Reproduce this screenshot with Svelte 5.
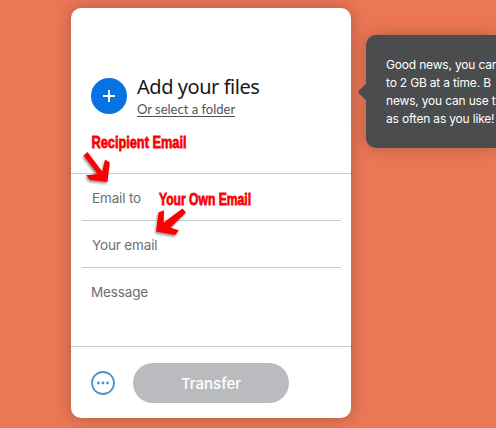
<script>
  const fields = ['Email to', 'Your email'];
  const tip = ['Good news, you can', 'to 2 GB at a time. B', 'news, you can use t', 'as often as you like!'];
</script>

<main>
  <section class="card">
    <header>
      <div class="plus">
        <svg width="36" height="36" viewBox="0 0 36 36"><path d="M18 12v12M12 18h12" stroke="#fff" stroke-width="2" /></svg>
      </div>
      <div class="titles">
        <h1>Add your files</h1>
        <a href="#folder">Or select a folder</a>
      </div>
    </header>
    <div class="fields">
      {#each fields as f}
        <div class="field"><span>{f}</span></div>
      {/each}
      <div class="message"><span>Message</span></div>
    </div>
    <footer>
      <svg width="24" height="24" viewBox="0 0 24 24">
        <circle cx="12" cy="12" r="11" fill="none" stroke="#4f94cf" stroke-width="1.8" />
        <g fill="#4f94cf"><circle cx="7.5" cy="12" r="1.4" /><circle cx="12" cy="12" r="1.4" /><circle cx="16.5" cy="12" r="1.4" /></g>
      </svg>
      <button>Transfer</button>
    </footer>
  </section>

  <aside>
    <svg class="tail" width="9" height="20" viewBox="0 0 9 20"><path d="M9 1 1 8.5Q-.3 10 1 11.5L9 19Z" fill="#4a4c4e" /></svg>
    {#each tip as line}<p>{line}</p>{/each}
  </aside>

  <svg class="notes" width="496" height="428" viewBox="0 0 496 428">
    <g class="note">
      <text x="91.5" y="148" textLength="95" lengthAdjust="spacingAndGlyphs">Recipient Email</text>
      <text x="159" y="205" textLength="92" lengthAdjust="spacingAndGlyphs">Your Own Email</text>
    </g>
    <g class="arrow">
      <path d="M87.5 152 83.5 155.5 97.5 174 86 175.3 90 180 107.5 182 109.8 162.5 105 159.5 102.3 171.5Z" />
      <path d="M182.5 208.5 186 212.5 170.5 227.5 179 230.5 175 235 156 231.5 158.5 212.5 164 210.3 163.7 222.5Z" />
    </g>
  </svg>
</main>

<style>
  :global(body) { background: #ec7755; }
  main {
    position: relative;
    width: 496px;
    height: 428px;
    box-sizing: border-box;
    padding: 8px 0 10px 71px;
    overflow: hidden;
    display: flex;
    align-items: flex-start;
    background: #ec7755;
    font-family: Inter, "Liberation Sans", sans-serif;
  }
  .card {
    flex: none;
    width: 280px;
    height: 410px;
    border-radius: 10px;
    background: #fff;
    display: flex;
    flex-direction: column;
    box-shadow: 0 0 16px rgba(70, 50, 40, 0.38);
  }
  header {
    box-sizing: border-box;
    height: 166px;
    padding: 66px 0 0 20px;
    display: flex;
    border-bottom: 1px solid #c9cacb;
  }
  .plus { margin-top: 4px; width: 36px; height: 36px; border-radius: 50%; background: #0773e3; }
  .plus svg, footer svg { display: block; flex: none; }
  .titles { margin-left: 10px; white-space: nowrap; }
  h1 { margin: 0; font: 400 20px/26px "Noto Sans", sans-serif; letter-spacing: -0.45px; color: #17181a; }
  a {
    display: inline-block;
    font: 13px/14px Lato, sans-serif;
    letter-spacing: 0;
    color: #505255;
    text-decoration: none;
    border-bottom: 1px solid #505255;
    margin-top: 2px;
    vertical-align: top;
  }
  .fields { height: 173px; font-size: 13.5px; letter-spacing: -0.15px; color: #6c6e71; box-sizing: border-box; border-bottom: 1px solid #c9cacb; }
  .field {
    height: 47px;
    box-sizing: border-box;
    margin: 0 10px 0 11px;
    padding: 1px 0 0 10px;
    border-bottom: 1px solid #c9cacb;
    display: flex;
    align-items: center;
  }
  .message { padding: 16px 0 0 20px; line-height: 17px; }
  footer { flex: 1; display: flex; align-items: center; padding: 1px 0 0 20px; }
  button {
    margin-left: 18px;
    width: 156px;
    height: 40px;
    border: 0;
    border-radius: 20px;
    background: #b9bbbe;
    color: #fff;
    font: 500 15px/20px Inter, sans-serif;
    padding: 2px 0 0;
  }
  aside {
    position: relative;
    flex: none;
    box-sizing: border-box;
    width: 130px;
    height: 113px;
    margin: 27px 0 0 15px;
    padding: 21px 0 0 20px;
    border-radius: 10px 0 0 10px;
    background: #4a4c4e;
    color: #fff;
    box-shadow: 0 0 16px rgba(70, 50, 40, 0.35);
  }
  aside p { margin: 0; font-size: 12px; letter-spacing: -0.18px; line-height: 18px; white-space: nowrap; }
  .tail { position: absolute; left: -8px; top: 47px; }
  .notes { position: absolute; left: 0; top: 0; pointer-events: none; }
  .note text { font: 700 17px "Liberation Sans", sans-serif; fill: #fa0005; stroke: #fa0005; stroke-width: 0.8px; }
  .arrow { fill: #fa0005; filter: drop-shadow(-1px 2px 1px rgba(0, 0, 0, 0.4)); }
</style>
